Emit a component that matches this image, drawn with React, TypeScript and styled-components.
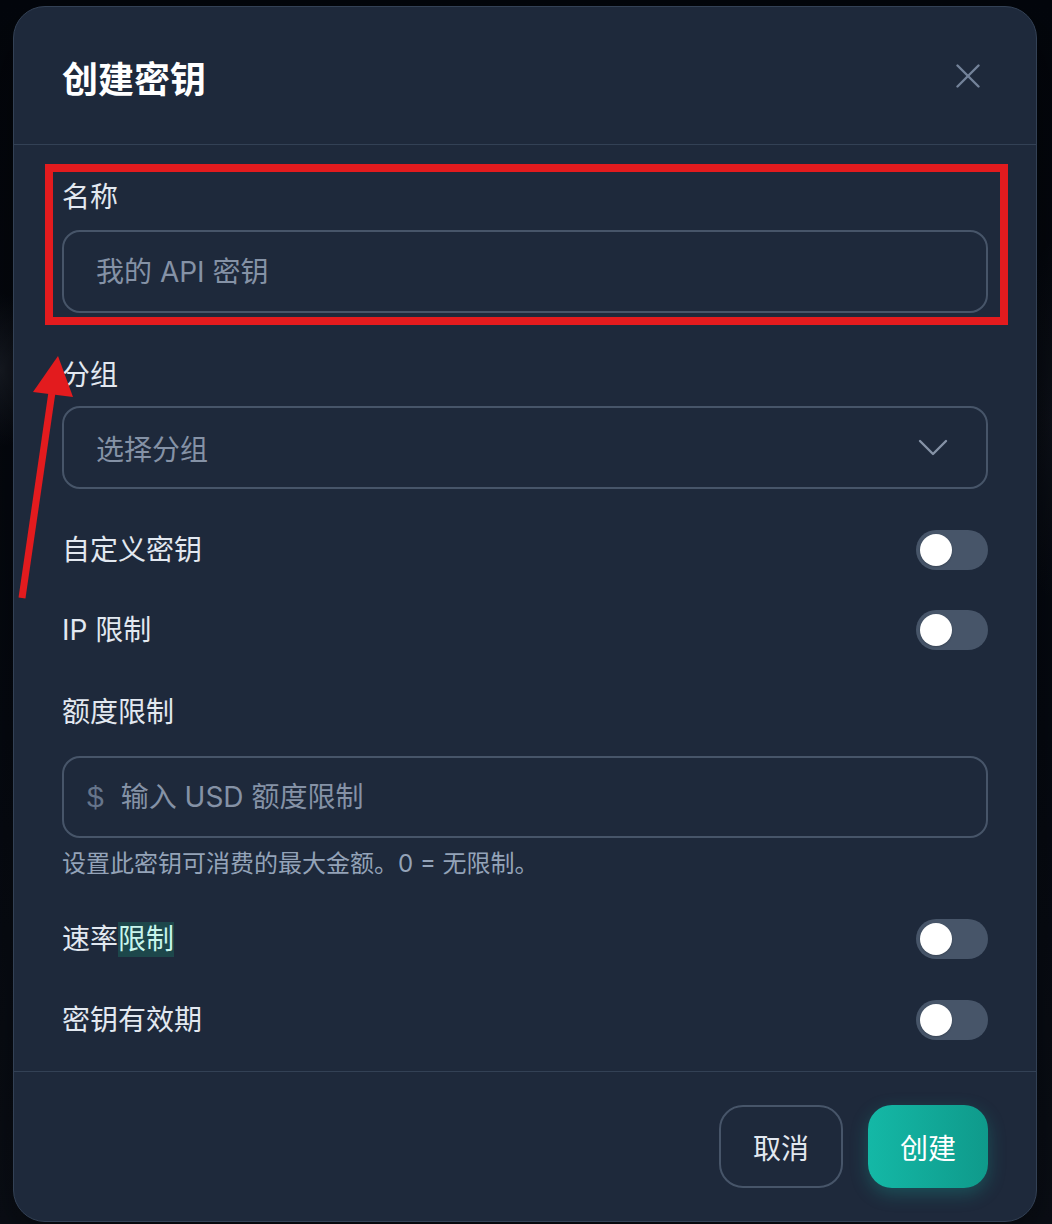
import React from "react";
import styled, { createGlobalStyle } from "styled-components";

const GlobalStyle = createGlobalStyle`
  html, body { margin: 0; padding: 0; }
  body {
    background: #04070d;
    font-family: "Inter", "Noto Sans CJK SC", "Noto Sans", sans-serif;
    -webkit-font-smoothing: antialiased;
  }
  *, *::before, *::after { box-sizing: border-box; }
`;

const Page = styled.div`
  position: relative;
  min-height: 1224px;
  padding: 6px 2px 0 0;
  display: flex;
  justify-content: center;
  align-items: flex-start;
  overflow: hidden;
  background:
    radial-gradient(ellipse 70px 110px at 0px 370px, rgba(130, 140, 160, 0.16), transparent 70%),
    radial-gradient(ellipse 50px 260px at 1052px 420px, rgba(130, 140, 160, 0.07), transparent 70%),
    linear-gradient(180deg, #03060c 0%, #060a12 60%, #0b0f17 100%);
`;

const Modal = styled.div`
  width: 1024px;
  background: #1e293b;
  border: 1px solid #334155;
  border-radius: 32px;
  display: flex;
  flex-direction: column;
  box-shadow: 0 24px 64px rgba(0, 0, 0, 0.55);
`;

const Header = styled.div`
  height: 138px;
  padding: 0 48px;
  display: flex;
  align-items: center;
  justify-content: space-between;
  border-bottom: 1px solid #334155;
`;

const Title = styled.h2`
  margin: 0;
  font-family: "Noto Sans CJK SC", sans-serif;
  font-size: 36px;
  line-height: 44px;
  font-weight: 700;
  color: #ffffff;
  padding-top: 2px;
`;

const CloseButton = styled.button`
  width: 40px;
  height: 40px;
  padding: 0;
  border: none;
  background: transparent;
  display: flex;
  align-items: center;
  justify-content: center;
  color: #738299;
  cursor: pointer;
`;

const Body = styled.div`
  padding: 32px 48px 31px;
  display: flex;
  flex-direction: column;
`;

const Field = styled.div<{ $mt?: number; $annotated?: boolean }>`
  position: relative;
  display: flex;
  flex-direction: column;
  margin-top: ${(p) => p.$mt ?? 0}px;

  ${(p) =>
    p.$annotated &&
    `
    &::after {
      content: "";
      position: absolute;
      top: -13px;
      left: -17px;
      right: -20px;
      bottom: -12px;
      border: 8px solid #e31b1e;
      pointer-events: none;
    }
  `}
`;

const Label = styled.label<{ $gap?: number }>`
  font-family: "Inter", "Noto Sans CJK SC", sans-serif;
  font-size: 28px;
  line-height: 40px;
  color: #e2e8f0;
  margin-bottom: ${(p) => p.$gap ?? 12}px;
`;

const InputShell = styled.div<{ $h?: number }>`
  height: ${(p) => p.$h ?? 83}px;
  border: 2px solid #475569;
  border-radius: 18px;
  display: flex;
  align-items: center;
  padding: 0 32px;
  gap: 17px;
  background: #1e293b;
`;

const Prefix = styled.span`
  font-family: "Liberation Sans", "Noto Sans", sans-serif;
  font-size: 30px;
  color: #66758b;
  margin-left: -9px;
  line-height: 1;
`;

const TextInput = styled.input`
  flex: 1;
  min-width: 0;
  border: none;
  outline: none;
  background: transparent;
  padding: 0;
  font-family: "Inter", "Noto Sans CJK SC", sans-serif;
  font-size: 28px;
  color: #e2e8f0;
  &::placeholder {
    color: #8592a6;
  }
`;

const SelectTrigger = styled.div`
  height: 83px;
  border: 2px solid #475569;
  border-radius: 18px;
  display: flex;
  align-items: center;
  justify-content: space-between;
  padding: 0 38px 0 32px;
  cursor: pointer;
`;

const SelectPlaceholder = styled.span`
  font-family: "Inter", "Noto Sans CJK SC", sans-serif;
  font-size: 28px;
  color: #8592a6;
`;

const Help = styled.p`
  margin: 10px 0 0;
  font-family: "Inter", "Noto Sans CJK SC", sans-serif;
  font-size: 24px;
  line-height: 32px;
  color: #94a3b8;
`;

const ToggleRow = styled.div<{ $mt?: number }>`
  height: 40px;
  margin-top: ${(p) => p.$mt ?? 40}px;
  display: flex;
  align-items: center;
  justify-content: space-between;
`;

const RowLabel = styled.span`
  font-family: "Inter", "Noto Sans CJK SC", sans-serif;
  font-size: 28px;
  line-height: 40px;
  color: #e2e8f0;
`;

const Mark = styled.span`
  display: inline-block;
  background: #1d474b;
  color: #c8f5ec;
  line-height: 35px;
`;

const Track = styled.button<{ $on?: boolean }>`
  width: 72px;
  height: 40px;
  border: none;
  border-radius: 20px;
  padding: 4px;
  display: flex;
  align-items: center;
  justify-content: ${(p) => (p.$on ? "flex-end" : "flex-start")};
  background: ${(p) => (p.$on ? "#14b8a6" : "#475569")};
  cursor: pointer;
`;

const Knob = styled.span`
  width: 32px;
  height: 32px;
  border-radius: 50%;
  background: #ffffff;
  box-shadow: 0 1px 2px rgba(0, 0, 0, 0.2);
`;

const Footer = styled.div`
  border-top: 1px solid #334155;
  padding: 33px 48px 33px;
  display: flex;
  justify-content: flex-end;
  gap: 25px;
`;

const Button = styled.button<{ $primary?: boolean }>`
  height: 83px;
  padding: 0 32px;
  border-radius: 24px;
  font-family: "Inter", "Noto Sans CJK SC", sans-serif;
  font-size: 28px;
  cursor: pointer;
  border: ${(p) => (p.$primary ? "none" : "2px solid #475569")};
  color: ${(p) => (p.$primary ? "#ffffff" : "#e2e8f0")};
  background: ${(p) =>
    p.$primary ? "linear-gradient(90deg, #14b8a6 0%, #0f9a8b 100%)" : "transparent"};
  box-shadow: ${(p) => (p.$primary ? "0 6px 18px rgba(20, 184, 166, 0.28)" : "none")};
`;

const ArrowOverlay = styled.svg`
  position: absolute;
  left: 0;
  top: 0;
  width: 120px;
  height: 620px;
  pointer-events: none;
`;

const CloseIcon = () => (
  <svg width="24" height="24" viewBox="0 0 24 24" fill="none" stroke="currentColor" strokeWidth="2.4" strokeLinecap="round">
    <line x1="1.5" y1="1.5" x2="22.5" y2="22.5" />
    <line x1="22.5" y1="1.5" x2="1.5" y2="22.5" />
  </svg>
);

const ChevronIcon = () => (
  <svg width="30" height="18" viewBox="0 0 30 18" fill="none" stroke="#8592a6" strokeWidth="2.4" strokeLinecap="round" strokeLinejoin="round">
    <polyline points="2,2 15,15 28,2" />
  </svg>
);

const Toggle = ({ on }: { on?: boolean }) => (
  <Track $on={on} type="button" aria-pressed={!!on}>
    <Knob />
  </Track>
);

export default function App() {
  return (
    <>
      <GlobalStyle />
      <Page>
        <Modal>
          <Header>
            <Title>创建密钥</Title>
            <CloseButton aria-label="关闭">
              <CloseIcon />
            </CloseButton>
          </Header>
          <Body>
            <Field $annotated>
              <Label $gap={13}>名称</Label>
              <InputShell>
                <TextInput placeholder="我的 API 密钥" />
              </InputShell>
            </Field>

            <Field $mt={42}>
              <Label $gap={11}>分组</Label>
              <SelectTrigger>
                <SelectPlaceholder>选择分组</SelectPlaceholder>
                <ChevronIcon />
              </SelectTrigger>
            </Field>

            <ToggleRow $mt={41}>
              <RowLabel>自定义密钥</RowLabel>
              <Toggle />
            </ToggleRow>

            <ToggleRow $mt={40}>
              <RowLabel>IP 限制</RowLabel>
              <Toggle />
            </ToggleRow>

            <Field $mt={42}>
              <Label $gap={24}>额度限制</Label>
              <InputShell $h={82}>
                <Prefix>$</Prefix>
                <TextInput placeholder="输入 USD 额度限制" />
              </InputShell>
              <Help>设置此密钥可消费的最大金额。0 = 无限制。</Help>
            </Field>

            <ToggleRow $mt={39}>
              <RowLabel>
                速率<Mark>限制</Mark>
              </RowLabel>
              <Toggle />
            </ToggleRow>

            <ToggleRow $mt={41}>
              <RowLabel>密钥有效期</RowLabel>
              <Toggle />
            </ToggleRow>
          </Body>
          <Footer>
            <Button>取消</Button>
            <Button $primary>创建</Button>
          </Footer>
        </Modal>
        <ArrowOverlay viewBox="0 0 120 620">
          <line x1="22" y1="598" x2="52" y2="392" stroke="#e31b1e" strokeWidth="7" />
          <polygon points="58,356 33,392 73,397" fill="#e31b1e" />
        </ArrowOverlay>
      </Page>
    </>
  );
}
